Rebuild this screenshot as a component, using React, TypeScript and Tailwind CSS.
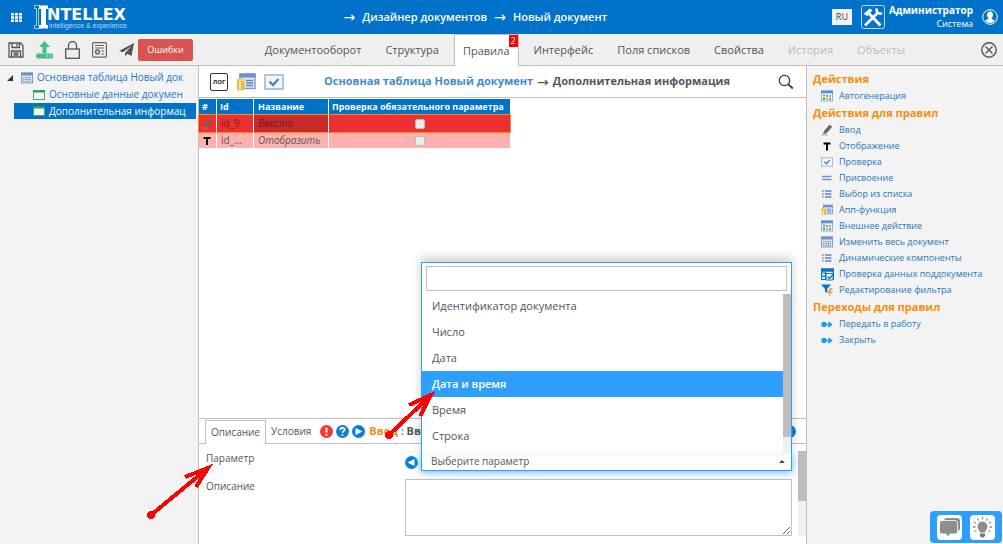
import React from 'react';

type IconName =
  | 'calendar'
  | 'pencil'
  | 'letter'
  | 'check'
  | 'equals'
  | 'list'
  | 'app'
  | 'table'
  | 'tableCheck'
  | 'filter'
  | 'transition';

interface ActionItem {
  title: string;
  icon: IconName;
}

interface ActionGroup {
  title: string;
  items: ActionItem[];
}

const tabs = [
  { title: 'Документооборот' },
  { title: 'Структура' },
  { title: 'Правила', active: true, errors: 2 },
  { title: 'Интерфейс' },
  { title: 'Поля списков' },
  { title: 'Свойства' },
  { title: 'История', disabled: true },
  { title: 'Объекты', disabled: true },
];

const groups: ActionGroup[] = [
  {
    title: 'Действия',
    items: [{ title: 'Автогенерация', icon: 'calendar' }],
  },
  {
    title: 'Действия для правил',
    items: [
      { title: 'Ввод', icon: 'pencil' },
      { title: 'Отображение', icon: 'letter' },
      { title: 'Проверка', icon: 'check' },
      { title: 'Присвоение', icon: 'equals' },
      { title: 'Выбор из списка', icon: 'list' },
      { title: 'Апп-функция', icon: 'app' },
      { title: 'Внешнее действие', icon: 'calendar' },
      { title: 'Изменить весь документ', icon: 'table' },
      { title: 'Динамические компоненты', icon: 'list' },
      { title: 'Проверка данных поддокумента', icon: 'tableCheck' },
      { title: 'Редактирование фильтра', icon: 'filter' },
    ],
  },
  {
    title: 'Переходы для правил',
    items: [
      { title: 'Передать в работу', icon: 'transition' },
      { title: 'Закрыть', icon: 'transition' },
    ],
  },
];

const options = ['Идентификатор документа', 'Число', 'Дата', 'Дата и время', 'Время', 'Строка'];

const TableIcon: React.FC<{ className?: string }> = ({ className }) => (
  <svg viewBox="0 0 12 12" className={className}>
    <rect x="0.5" y="1" width="11" height="10" fill="#dfe7f3" stroke="#7f9dcb" />
    <path d="M0 0.5h12v3H0z" fill="#6f92c8" />
    <path d="M2.5 5.5h7v4h-7zM5 5.5v4M7.5 5.5v4M2.5 7.5h7" fill="#fff" stroke="#7f93b5" strokeWidth="0.7" />
  </svg>
);

const CheckIcon: React.FC<{ className?: string }> = ({ className }) => (
  <svg viewBox="0 0 20 16" className={className}>
    <rect x="1" y="1" width="18" height="14" fill="#f4f8fd" stroke="#9db7dd" strokeWidth="1.6" />
    <path d="M5.5 7.5l3.5 3.5 5.5-6" fill="none" stroke="#5580bd" strokeWidth="2.4" />
  </svg>
);

const AppIcon: React.FC<{ className?: string }> = ({ className }) => (
  <svg viewBox="0 0 20 18" className={className}>
    <rect x="4" y="1" width="15" height="14.5" fill="#dce8f8" stroke="#7b9acb" strokeWidth="1.4" />
    <path d="M3.3 0.5h16.2v4H3.3z" fill="#6d92cb" />
    <path d="M10 7.5h7M10 10h7M10 12.5h7" stroke="#5f84bd" strokeWidth="1.3" />
    <path d="M1 7v9c0 2 7.5 2 7.5 0V7z" fill="#e9b93a" />
    <path d="M3 8v8.8h2V8z" fill="#fae9a8" />
    <ellipse cx="4.75" cy="7" rx="3.75" ry="1.5" fill="#f7dc84" stroke="#d19f25" strokeWidth="0.5" />
  </svg>
);

const PencilIcon: React.FC<{ className?: string }> = ({ className }) => (
  <svg viewBox="0 0 12 12" className={className}>
    <path d="M3 7L8.5 0.8l2.8 2-5.7 6.4L2 10z" fill="#666" />
    <path d="M0.5 10.8h6" stroke="#999" />
  </svg>
);

const icons: Record<IconName, React.ReactNode> = {
  calendar: (
    <svg viewBox="0 0 12 12" className="w-3 h-3">
      <rect x="0.5" y="1" width="11" height="10" fill="#eef4fc" stroke="#8eb2de" />
      <path d="M0 0.5h12v2.8H0z" fill="#5d8fd4" />
      <path d="M2 7h2v3H2zM5 5h2v2H5z" fill="#52b96a" />
      <path d="M5 8h2v2H5zM8 5h2v2H8z" fill="#e8a13c" />
      <path d="M2 4.5h2v1.5H2zM8 8h2v2H8z" fill="#5aa3d8" />
    </svg>
  ),
  pencil: <PencilIcon className="w-3 h-3" />,
  letter: (
    <svg viewBox="0 0 12 12" className="w-3 h-3">
      <path d="M2.5 3.5h7M6 3.5v7" stroke="#000" strokeWidth="2" />
    </svg>
  ),
  check: <CheckIcon className="w-3 h-2.5" />,
  equals: (
    <svg viewBox="0 0 12 12" className="w-3 h-3">
      <path d="M1 4.5h9.5M1 7.5h9.5" stroke="#6c92c9" strokeWidth="1.5" />
    </svg>
  ),
  list: (
    <svg viewBox="0 0 12 12" className="w-3 h-3">
      <path d="M1 3h1.6M1 6h1.6M1 9h1.6M4 3h6.5M4 6h6.5M4 9h6.5" stroke="#6486bb" strokeWidth="1.5" />
    </svg>
  ),
  app: <AppIcon className="w-3 h-3" />,
  table: <TableIcon className="w-3 h-3" />,
  tableCheck: (
    <svg viewBox="0 0 13 13" className="w-[13px] h-[13px]">
      <path d="M0.6 1h11.8v10.5H0.6zM0.6 5h4M0.6 8.2h4M4.5 4v7.5" fill="#fff" stroke="#0a72c6" strokeWidth="1.2" />
      <path d="M0 0.5h13v3.3H0z" fill="#0a72c6" />
      <path d="M5 5.5h7v6.5H5z" fill="#fff" stroke="#0a72c6" />
      <path d="M6.5 8.5l2 2 3.5-4" fill="none" stroke="#0a72c6" strokeWidth="1.3" />
    </svg>
  ),
  filter: (
    <svg viewBox="0 0 13 13" className="w-[13px] h-[13px]">
      <path d="M0 0.5h10L6.2 5v4L4 7.5V5z" fill="#0a72c6" />
      <path d="M9 4L5.5 9h2.8l-1.5 4L12.5 7.5H9.5L12 4z" fill="#f7a35a" />
    </svg>
  ),
  transition: (
    <svg viewBox="0 0 12 12" className="w-3 h-3">
      <circle cx="3" cy="6.5" r="2.7" fill="#219fd6" />
      <path d="M5.5 6.5h3" stroke="#219fd6" strokeWidth="1.5" />
      <path d="M7.5 3l4 3.5-4 3.5z" fill="#219fd6" />
    </svg>
  ),
};

const FormIcon: React.FC = () => (
  <svg viewBox="0 0 12 10" className="w-3 h-2.5 shrink-0">
    <rect x="0.5" y="0.5" width="11" height="9" fill="#f6f6f6" stroke="#3fae68" />
    <path d="M0 0h12v2.5H0z" fill="#2c9e57" />
  </svg>
);

const CircleIcon: React.FC<{ color: string; children: React.ReactNode }> = ({ color, children }) => (
  <svg viewBox="0 0 13 13" className="w-[13px] h-[13px] shrink-0">
    <circle cx="6.5" cy="6.5" r="6.5" fill={color} />
    {children}
  </svg>
);

const Header: React.FC = () => (
  <header className="h-[34px] shrink-0 flex items-center bg-[#0072c9] text-white">
    <button aria-label="Меню" className="ml-[11px]">
      <svg viewBox="0 0 11 9" className="w-[11px] h-[9px]" fill="#fff">
        <path d="M0 0h3v2.4H0zM4 0h3v2.4H4zM8 0h3v2.4H8zM0 3.3h3v2.4H0zM4 3.3h3v2.4H4zM8 3.3h3v2.4H8zM0 6.6h3V9H0zM4 6.6h3V9H4zM8 6.6h3V9H8z" />
      </svg>
    </button>
    <a href="#" className="ml-3 flex items-center">
      <svg viewBox="0 0 15 24" className="w-[15px] h-6">
        <path d="M0.5 0.5h6v3h-2v17h2v3h-6v-3h2v-17h-2z" fill="none" stroke="#9cc9ee" />
        <path d="M5 0.5h9V4h-2v16h2v3.5H5V20h2V4H5z" fill="#fff" />
      </svg>
      <span className="flex flex-col">
        <span className="pt-0.5 font-['DejaVu_Sans',sans-serif] text-[16px] leading-[14px] font-bold -ml-0.5">NTELLEX</span>
        <span className="font-['Liberation_Sans',sans-serif] text-[7px] leading-[7px] text-[#b5d8f5]">
          intelligence &amp; experience
        </span>
      </span>
    </a>
    <nav className="flex-1 flex items-center justify-center gap-[7px] pr-2 text-[11px] font-semibold">
      <span className="font-['DejaVu_Sans',sans-serif] text-[14px] font-normal">→</span>
      <a href="#">Дизайнер документов</a>
      <span className="font-['DejaVu_Sans',sans-serif] text-[14px] font-normal">→</span>
      <a href="#">Новый документ</a>
    </nav>
    <button className="w-5 h-4 bg-[#f0f0f0] text-[#444] text-[9px] leading-4">RU</button>
    <svg viewBox="0 0 24 24" className="ml-[9px] w-6 h-6" fill="none" stroke="#fff">
      <rect x="0.5" y="0.5" width="23" height="23" rx="2" stroke="#b9dcf7" />
      <path d="M7.5 8L19.5 20.5" strokeWidth="3" />
      <path d="M4 20.5L17 7.5" strokeWidth="2.6" />
      <path d="M2.5 9l6-5.5 3 1.5-5 6z" fill="#fff" stroke="none" />
      <path d="M16 3.5c-1.5 3 2 6.5 5 4.5" strokeWidth="2.5" />
    </svg>
    <div className="ml-1 text-right">
      <div className="text-[10px] leading-[13px] font-bold">Администратор</div>
      <div className="text-[9px] leading-[13px]">Система</div>
    </div>
    <svg viewBox="0 0 16 16" className="ml-[9px] mr-[5px] w-4 h-4">
      <circle cx="8" cy="8" r="7.3" fill="none" stroke="#fff" />
      <path d="M8 2.5c2 0 3 1.3 3 3.2 0 1.6-.7 2.6-1.3 3.3v1l3.3 1.6C11.5 13.5 9.8 14 8 14s-3.5-.5-5-2.4L6.3 10V9C5.7 8.3 5 7.3 5 5.7c0-1.9 1-3.2 3-3.2z" fill="#fff" />
    </svg>
  </header>
);

const Toolbar: React.FC = () => (
  <div className="h-8 shrink-0 flex items-center bg-[#efefef] border-b border-[#bfbfbf]">
    <div className="flex items-center gap-3 pl-2">
      <button aria-label="Сохранить">
        <svg viewBox="0 0 16 16" className="w-4 h-4" fill="none" stroke="#555" strokeWidth="1.3">
          <path d="M1 1h11.5L15 3.5V15H1z" />
          <path d="M4 1v4.5h7.5V1M9 2v2.5M3.5 15V9h9v6M5.5 11h5M5.5 13h5" />
        </svg>
      </button>
      <button aria-label="Опубликовать">
        <svg viewBox="0 0 17 18" className="w-[17px] h-[18px]">
          <path d="M8.5 0L14 6h-3.5v6h-4V6H3z" fill="#45be82" />
          <rect x="0" y="12.5" width="17" height="5" rx="2" fill="#45be82" />
          <path d="M10.5 15h1.5M13.5 15h1.5" stroke="#fff" />
        </svg>
      </button>
      <button aria-label="Заблокировать">
        <svg viewBox="0 0 15 18" className="w-[15px] h-[18px]" fill="none" stroke="#555" strokeWidth="1.3">
          <rect x="0.7" y="8" width="13.6" height="9.3" />
          <path d="M3.5 8V4.5a4 4 0 0 1 8 0V8" />
        </svg>
      </button>
      <button aria-label="Сертификат">
        <svg viewBox="0 0 15 16" className="w-[15px] h-4" fill="none" stroke="#666" strokeWidth="1.2">
          <rect x="0.6" y="0.6" width="13.8" height="14.6" rx="1" />
          <path d="M3 3.5h9M3 6h9M9.5 9h2.5M9.5 12h2.5" />
          <circle cx="5.5" cy="10" r="1.9" strokeWidth="1.5" />
        </svg>
      </button>
      <button aria-label="Отправить">
        <svg viewBox="0 0 15 14" className="w-[15px] h-3.5" fill="#555">
          <path d="M15 0L0 8l4 1.2L12.5 3 6 10v3.5l2.3-2.7L12.5 13z" />
        </svg>
      </button>
    </div>
    <button className="ml-1 w-[55px] h-[22px] rounded-xs bg-[#d9534f] text-white text-[9px]">Ошибки</button>
    <nav className="flex-1 self-stretch flex justify-center gap-1.5 pr-1">
      {tabs.map((tab) => (
        <button
          key={tab.title}
          disabled={tab.disabled}
          className={
            tab.active
              ? 'relative -mb-px px-2 pt-0.5 border border-b-0 border-[#bfbfbf] bg-white text-[11px] text-[#555]'
              : tab.disabled
                ? 'px-[9px] pt-0.5 text-[11px] text-[#bdbdbd]'
                : 'px-[9px] pt-0.5 text-[11px] text-[#555]'
          }
        >
          {tab.title}
          {tab.errors && (
            <span className="absolute top-0 right-0 w-[9px] h-3 bg-[#f00] text-white text-[9px] leading-[11px]">
              {tab.errors}
            </span>
          )}
        </button>
      ))}
    </nav>
    <button aria-label="Закрыть" className="mr-1.5">
      <svg viewBox="0 0 16 16" className="w-4 h-4" fill="none" stroke="#555" strokeWidth="1.4">
        <circle cx="8" cy="8" r="7.2" />
        <path d="M4.5 4.5l7 7M11.5 4.5l-7 7" />
      </svg>
    </button>
  </div>
);

const Tree: React.FC = () => (
  <aside className="w-[199px] shrink-0 pt-[3px] bg-[#f3f3f3] border-r border-[#bfbfbf] text-[10px] leading-[17px] text-[#1d79c7] whitespace-nowrap">
    <div className="flex items-center pl-[7px] pr-1.5">
      <svg viewBox="0 0 6 6" className="w-1.5 h-1.5 mr-2 shrink-0">
        <path d="M6 0v6H0z" fill="#333" />
      </svg>
      <TableIcon className="w-3 h-3 mr-1 shrink-0" />
      <a href="#">Основная таблица Новый док</a>
    </div>
    <div className="flex items-center gap-1 pl-[33px] pr-1.5">
      <FormIcon />
      <a href="#">Основные данные докумен</a>
    </div>
    <div className="flex items-center gap-1 ml-3.5 mr-0.5 pl-[19px] pr-1 bg-[#0072c9] text-white leading-4">
      <FormIcon />
      <a href="#">Дополнительная информац</a>
    </div>
  </aside>
);

const RulesTable: React.FC = () => (
  <table className="w-[313px] table-fixed border-separate border-spacing-px -ml-px text-left text-[10px] leading-[15px]">
    <thead>
      <tr className="bg-[#0072c9] text-white text-[9px] whitespace-nowrap">
        <th className="w-[17px] pl-[3px] font-bold">#</th>
        <th className="w-9 pl-[3px] font-bold">Id</th>
        <th className="w-[74px] pl-1 font-bold">Название</th>
        <th className="pl-[3px] font-bold">Проверка обязательного параметра</th>
      </tr>
    </thead>
    <tbody>
      <tr className="relative h-[17px] bg-[#ec2f31] outline outline-1 outline-[#f68d0c] text-[#7c2020]">
        <td className="pl-[3px]"><PencilIcon className="w-2.5 h-2.5" /></td>
        <td className="pl-1">id_9</td>
        <td className="pl-1 bg-[#c92a2b] italic text-[#6b1d1d]">Ввести</td>
        <td>
          <input type="checkbox" aria-label="Проверка id_9" className="block mx-auto w-2.5 h-2.5 appearance-none rounded-xs border border-[#bbb] bg-[#ececec]" />
        </td>
      </tr>
      <tr className="bg-[#ffb1b1] text-[#555]">
        <td className="pl-1"><svg viewBox="0 0 8 8" className="w-2 h-2"><path d="M0.5 1h7M4 1v7" stroke="#000" strokeWidth="2" /></svg></td>
        <td className="pl-1">id_...</td>
        <td className="pl-1 italic">Отобразить</td>
        <td>
          <input type="checkbox" aria-label="Проверка id_10" className="block mx-auto w-2.5 h-2.5 appearance-none rounded-xs border border-[#bbb] bg-[#ececec]" />
        </td>
      </tr>
    </tbody>
  </table>
);

const ParameterSelect: React.FC = () => (
  <div className="relative flex-1 h-[18px]">
    <button
      id="parameter"
      className="w-full h-full flex items-center justify-between pl-[9px] pr-1.5 border border-t-0 border-[#2f9fff] bg-white text-[10px] text-[#555] shadow-[0_1px_8px_rgba(47,159,255,0.8)]"
    >
      Выберите параметр
      <svg viewBox="0 0 6 3" className="w-1.5 h-[3px]"><path d="M0 3l3-3 3 3z" fill="#444" /></svg>
    </button>
    <div className="absolute bottom-full inset-x-0 z-10 bg-white border border-b-0 border-[#2f9fff] shadow-[0_-4px_10px_rgba(0,0,0,0.2)]">
      <div className="px-1 pt-[3px] pb-0.5">
        <input aria-label="Поиск параметра" className="block w-full h-[25px] px-1 border border-[#bfbfbf] text-[11px] outline-none" />
      </div>
      <div className="flex h-40">
        <ul role="listbox" className="flex-1 overflow-hidden text-[11px] leading-[26px] text-[#555]">
          {options.map((option) => (
            <li
              key={option}
              role="option"
              aria-selected={option === 'Дата и время'}
              className={option === 'Дата и время' ? 'pl-2.5 bg-[#2f9fff] text-white font-semibold' : 'pl-2.5'}
            >
              {option}
            </li>
          ))}
        </ul>
        <div className="w-2 mt-px bg-[#f0f0f0]">
          <div className="h-[143px] bg-[#bdbdbd]" />
        </div>
      </div>
    </div>
  </div>
);

const RuleDetails: React.FC = () => (
  <section className="shrink-0 border-t border-[#bfbfbf] text-[10px] text-[#555]">
    <div className="h-[25px] flex items-center pl-1.5 border-b border-[#bfbfbf]">
      <button className="self-stretch mt-px -mb-px px-[5px] border border-b-0 border-[#bfbfbf] bg-white">Описание</button>
      <button className="px-[5px]">Условия</button>
      <div className="flex items-center gap-[3px] ml-1">
        <CircleIcon color="#fb3434">
          <path d="M6.5 2.5v5M6.5 9v1.8" stroke="#fff" strokeWidth="2" />
        </CircleIcon>
        <CircleIcon color="#0a7de0">
          <path d="M4.3 5c0-3 4.6-2.8 4.4-.3C8.6 6.2 6.5 6 6.5 8M6.5 9.2v1.7" fill="none" stroke="#fff" strokeWidth="1.7" />
        </CircleIcon>
        <CircleIcon color="#0a7de0">
          <path d="M3.5 3l7 3.5-7 3.5z" fill="#fff" />
        </CircleIcon>
      </div>
      <div className="flex-1 ml-1 text-[11px] font-bold whitespace-nowrap">
        <span className="text-[#f68d0c]">Ввод</span> <span className="text-[#2f9fff]">:</span> Вв
      </div>
      <div className="mr-2.5">
        <CircleIcon color="#0a7de0">
          <path d="M4 4l5 5M9 4l-5 5" stroke="#fff" strokeWidth="1.6" />
        </CircleIcon>
      </div>
    </div>
    <div className="flex pt-[7px] pb-2">
      <div className="flex-1 pl-[7px] pr-1.5 pt-0.5">
        <div className="flex">
          <label htmlFor="parameter" className="w-[199px] leading-[10px]">Параметр</label>
          <div className="flex-1 flex items-center gap-[3px]">
            <CircleIcon color="#0a7de0">
              <path d="M9.5 3l-7 3.5 7 3.5z" fill="#fff" />
            </CircleIcon>
            <ParameterSelect />
          </div>
        </div>
        <div className="flex mt-2">
          <label htmlFor="description" className="w-[199px] leading-[14px]">Описание</label>
          <textarea id="description" className="flex-1 block h-[57px] border border-[#bfbfbf] resize outline-none" />
        </div>
      </div>
      <div className="w-2 bg-[#f0f0f0]">
        <div className="h-[50px] bg-[#bdbdbd]" />
      </div>
    </div>
  </section>
);

const Actions: React.FC = () => (
  <aside className="w-[197px] shrink-0 pt-1 pl-1.5 bg-[#f3f3f3] border-l border-[#bfbfbf]">
    {groups.map((group) => (
      <section key={group.title}>
        <h2 className="text-[11px] leading-[18px] font-bold text-[#f68d0c]">{group.title}</h2>
        <ul>
          {group.items.map((item) => (
            <li key={item.title} className="h-4 flex items-center pl-2">
              <span className="w-[18px] flex items-center">{icons[item.icon]}</span>
              <a href="#" className="text-[9px] leading-[18px] text-[#2478c0]">{item.title}</a>
            </li>
          ))}
        </ul>
      </section>
    ))}
  </aside>
);

const App: React.FC = () => {
  return (
    <div className="relative h-screen flex flex-col overflow-hidden bg-white font-['Open_Sans',sans-serif]">
      <Header />
      <Toolbar />
      <div className="flex-1 min-h-0 flex">
        <Tree />
        <main className="flex-1 min-w-0 flex flex-col">
          <div className="h-8 shrink-0 flex items-center pl-[11px] pr-3 border-b border-[#bfbfbf]">
            <button className="w-[18px] h-[18px] rounded-xs border border-[#333] text-[6px] leading-4 font-bold text-[#222]">ЛОГ</button>
            <AppIcon className="ml-2 w-5 h-[18px]" />
            <CheckIcon className="ml-2 w-5 h-4" />
            <h1 className="flex-1 flex items-center justify-center gap-1 pr-2 text-[11px] font-bold text-[#555] whitespace-nowrap">
              <a href="#" className="text-[#428bca]">Основная таблица Новый документ</a>
              <span className="font-['DejaVu_Sans',sans-serif] text-[14px] leading-4 font-normal">→</span>
              <span>Дополнительная информация</span>
            </h1>
            <button aria-label="Поиск">
              <svg viewBox="0 0 16 16" className="w-4 h-4" fill="none" stroke="#333">
                <circle cx="6.5" cy="6.5" r="5.2" strokeWidth="1.2" />
                <path d="M10.3 10.3l4.5 4.2" strokeWidth="1.8" />
              </svg>
            </button>
          </div>
          <div className="flex-1">
            <RulesTable />
          </div>
          <RuleDetails />
        </main>
        <Actions />
      </div>

      <div className="absolute right-px bottom-px h-8 flex items-center gap-2 px-[7px] rounded-sm bg-[#2f9fff]">
        <button aria-label="Сообщения" className="w-[25px] h-[25px] rounded-sm bg-white">
          <svg viewBox="0 0 25 25" className="w-full h-full">
            <rect x="7" y="3" width="16" height="13" rx="3" fill="#8d8d8d" />
            <path d="M5 5.5h13a2.5 2.5 0 0 1 2.5 2.5v8.5a2.5 2.5 0 0 1-2.5 2.5h-5l-2 3-2-3H5a2.5 2.5 0 0 1-2.5-2.5V8A2.5 2.5 0 0 1 5 5.5z" fill="#8d8d8d" stroke="#fff" strokeWidth="0.8" />
          </svg>
        </button>
        <button aria-label="Подсказки" className="w-[25px] h-[25px] rounded-sm bg-white">
          <svg viewBox="0 0 25 25" className="w-full h-full">
            <path d="M12.5 6.5a5 5 0 0 1 5 5c0 2.5-2 3.5-2.5 6h-5c-.5-2.5-2.5-3.5-2.5-6a5 5 0 0 1 5-5z" fill="#8d8d8d" />
            <path d="M10 18.5h5v2.5l-1.5 1.5h-2L10 21z" fill="#777" />
            <path d="M12.5 2v2.5M7.5 3.5l1.2 2M17.5 3.5l-1.2 2M4 7l2 1.3M21 7l-2 1.3M3 12h2.5M22 12h-2.5M4.5 16.5l2-1M20.5 16.5l-2-1" stroke="#8d8d8d" strokeWidth="1.3" />
          </svg>
        </button>
      </div>

      {/* Pointer arrows over the form */}
      <svg className="absolute inset-0 z-20 w-full h-full pointer-events-none" fill="none" stroke="#f00" strokeWidth="4" shapeRendering="crispEdges">
        <path d="M151 515L208 468M185 477L208 468L196 487" />
        <circle cx="151" cy="515" r="3" fill="#f00" strokeWidth="2" />
        <path d="M389 435L431 395M409 405L431 395L420 416" />
        <circle cx="389" cy="435" r="3" fill="#f00" strokeWidth="2" />
      </svg>
    </div>
  );
};

export default App;
